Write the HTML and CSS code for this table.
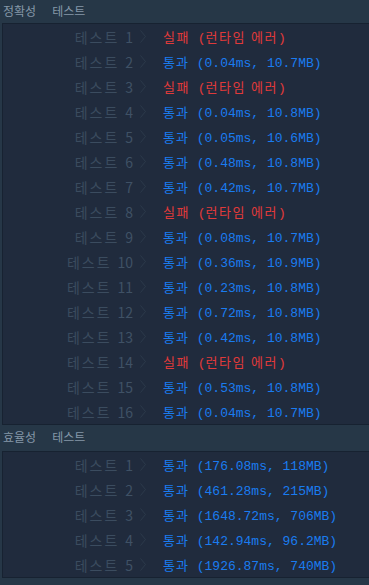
FILE: index.html
```html
<!DOCTYPE html>
<html lang="ko">
<head>
<meta charset="utf-8">
<link rel="stylesheet" href="styles.css">
</head>
<body>
<div class="section-title first"><span>정확성</span><span class="word">테스트</span></div>
<div class="result-box">
  <div class="row"><span class="label"><span class="lk">테스트</span> 1</span><svg class="chev" viewBox="0 0 6 13"><path d="M0.5 0.5 L5.5 6.5 L0.5 12.5"/></svg><span class="res fail"><span class="ko">실패</span> (<span class="ko">런타임 에러</span>)</span></div>
  <div class="row"><span class="label"><span class="lk">테스트</span> 2</span><svg class="chev" viewBox="0 0 6 13"><path d="M0.5 0.5 L5.5 6.5 L0.5 12.5"/></svg><span class="res pass"><span class="ko">통과</span> (0.04ms, 10.7MB)</span></div>
  <div class="row"><span class="label"><span class="lk">테스트</span> 3</span><svg class="chev" viewBox="0 0 6 13"><path d="M0.5 0.5 L5.5 6.5 L0.5 12.5"/></svg><span class="res fail"><span class="ko">실패</span> (<span class="ko">런타임 에러</span>)</span></div>
  <div class="row"><span class="label"><span class="lk">테스트</span> 4</span><svg class="chev" viewBox="0 0 6 13"><path d="M0.5 0.5 L5.5 6.5 L0.5 12.5"/></svg><span class="res pass"><span class="ko">통과</span> (0.04ms, 10.8MB)</span></div>
  <div class="row"><span class="label"><span class="lk">테스트</span> 5</span><svg class="chev" viewBox="0 0 6 13"><path d="M0.5 0.5 L5.5 6.5 L0.5 12.5"/></svg><span class="res pass"><span class="ko">통과</span> (0.05ms, 10.6MB)</span></div>
  <div class="row"><span class="label"><span class="lk">테스트</span> 6</span><svg class="chev" viewBox="0 0 6 13"><path d="M0.5 0.5 L5.5 6.5 L0.5 12.5"/></svg><span class="res pass"><span class="ko">통과</span> (0.48ms, 10.8MB)</span></div>
  <div class="row"><span class="label"><span class="lk">테스트</span> 7</span><svg class="chev" viewBox="0 0 6 13"><path d="M0.5 0.5 L5.5 6.5 L0.5 12.5"/></svg><span class="res pass"><span class="ko">통과</span> (0.42ms, 10.7MB)</span></div>
  <div class="row"><span class="label"><span class="lk">테스트</span> 8</span><svg class="chev" viewBox="0 0 6 13"><path d="M0.5 0.5 L5.5 6.5 L0.5 12.5"/></svg><span class="res fail"><span class="ko">실패</span> (<span class="ko">런타임 에러</span>)</span></div>
  <div class="row"><span class="label"><span class="lk">테스트</span> 9</span><svg class="chev" viewBox="0 0 6 13"><path d="M0.5 0.5 L5.5 6.5 L0.5 12.5"/></svg><span class="res pass"><span class="ko">통과</span> (0.08ms, 10.7MB)</span></div>
  <div class="row"><span class="label"><span class="lk">테스트</span> 10</span><svg class="chev" viewBox="0 0 6 13"><path d="M0.5 0.5 L5.5 6.5 L0.5 12.5"/></svg><span class="res pass"><span class="ko">통과</span> (0.36ms, 10.9MB)</span></div>
  <div class="row"><span class="label"><span class="lk">테스트</span> 11</span><svg class="chev" viewBox="0 0 6 13"><path d="M0.5 0.5 L5.5 6.5 L0.5 12.5"/></svg><span class="res pass"><span class="ko">통과</span> (0.23ms, 10.8MB)</span></div>
  <div class="row"><span class="label"><span class="lk">테스트</span> 12</span><svg class="chev" viewBox="0 0 6 13"><path d="M0.5 0.5 L5.5 6.5 L0.5 12.5"/></svg><span class="res pass"><span class="ko">통과</span> (0.72ms, 10.8MB)</span></div>
  <div class="row"><span class="label"><span class="lk">테스트</span> 13</span><svg class="chev" viewBox="0 0 6 13"><path d="M0.5 0.5 L5.5 6.5 L0.5 12.5"/></svg><span class="res pass"><span class="ko">통과</span> (0.42ms, 10.8MB)</span></div>
  <div class="row"><span class="label"><span class="lk">테스트</span> 14</span><svg class="chev" viewBox="0 0 6 13"><path d="M0.5 0.5 L5.5 6.5 L0.5 12.5"/></svg><span class="res fail"><span class="ko">실패</span> (<span class="ko">런타임 에러</span>)</span></div>
  <div class="row"><span class="label"><span class="lk">테스트</span> 15</span><svg class="chev" viewBox="0 0 6 13"><path d="M0.5 0.5 L5.5 6.5 L0.5 12.5"/></svg><span class="res pass"><span class="ko">통과</span> (0.53ms, 10.8MB)</span></div>
  <div class="row"><span class="label"><span class="lk">테스트</span> 16</span><svg class="chev" viewBox="0 0 6 13"><path d="M0.5 0.5 L5.5 6.5 L0.5 12.5"/></svg><span class="res pass"><span class="ko">통과</span> (0.04ms, 10.7MB)</span></div>
</div>
<div class="section-title second"><span>효율성</span><span class="word">테스트</span></div>
<div class="result-box">
  <div class="row"><span class="label"><span class="lk">테스트</span> 1</span><svg class="chev" viewBox="0 0 6 13"><path d="M0.5 0.5 L5.5 6.5 L0.5 12.5"/></svg><span class="res pass"><span class="ko">통과</span> (176.08ms, 118MB)</span></div>
  <div class="row"><span class="label"><span class="lk">테스트</span> 2</span><svg class="chev" viewBox="0 0 6 13"><path d="M0.5 0.5 L5.5 6.5 L0.5 12.5"/></svg><span class="res pass"><span class="ko">통과</span> (461.28ms, 215MB)</span></div>
  <div class="row"><span class="label"><span class="lk">테스트</span> 3</span><svg class="chev" viewBox="0 0 6 13"><path d="M0.5 0.5 L5.5 6.5 L0.5 12.5"/></svg><span class="res pass"><span class="ko">통과</span> (1648.72ms, 706MB)</span></div>
  <div class="row"><span class="label"><span class="lk">테스트</span> 4</span><svg class="chev" viewBox="0 0 6 13"><path d="M0.5 0.5 L5.5 6.5 L0.5 12.5"/></svg><span class="res pass"><span class="ko">통과</span> (142.94ms, 96.2MB)</span></div>
  <div class="row"><span class="label"><span class="lk">테스트</span> 5</span><svg class="chev" viewBox="0 0 6 13"><path d="M0.5 0.5 L5.5 6.5 L0.5 12.5"/></svg><span class="res pass"><span class="ko">통과</span> (1926.87ms, 740MB)</span></div>
</div>
</body>
</html>
```
FILE: styles.css
```css
html, body {
  margin: 0;
  padding: 0;
  background: #263747;
}
body {
  font-family: "Liberation Mono", "Noto Sans CJK KR", monospace;
  font-size: 13px;
  overflow: hidden;
}
.section-title {
  display: flex;
  color: #8597a9;
  padding-left: 3px;
  font-family: "Noto Sans CJK KR", sans-serif;
  font-size: 12px;
  box-sizing: border-box;
}
.section-title .word {
  margin-left: 16px;
}
.section-title.first {
  height: 23px;
  line-height: 21px;
}
.section-title.second {
  height: 26px;
  line-height: 24px;
}
.result-box {
  margin-left: 2px;
  background: #202b3d;
  border: 1px solid #172231;
  border-right: none;
}
.row {
  display: flex;
  align-items: center;
  height: 25px;
}
.label {
  width: 130px;
  text-align: right;
  color: #3f5165;
  font-family: "Noto Sans CJK KR", sans-serif;
  font-size: 14px;
  white-space: pre;
}
.label .lk {
  letter-spacing: 2px;
  margin-right: 2px;
  color: #3b4c5f;
}
.chev {
  width: 6px;
  height: 13px;
  margin-left: 7px;
  flex: none;
}
.chev path {
  fill: none;
  stroke: #2c3a4b;
  stroke-width: 1;
}
.res {
  margin-left: 17px;
  white-space: pre;
}
.res .ko {
  font-family: "Noto Sans CJK KR", sans-serif;
  letter-spacing: 1px;
}
.fail .ko {
  letter-spacing: 1.5px;
}
.fail { color: #e13a3a; }
.pass { color: #1a7cf0; }
```
